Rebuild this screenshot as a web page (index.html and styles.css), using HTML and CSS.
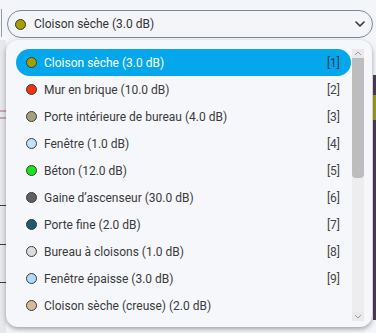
FILE: index.html
```html
<!DOCTYPE html>
<html lang="fr">
<head>
    <meta charset="UTF-8">
    <meta name="viewport" content="width=device-width, initial-scale=1.0">
    <title>Matériau</title>
    <link rel="stylesheet" href="styles.css">
</head>
<body>
    <div class="page">
        <div class="edge-left"></div>
        <div class="main">
            <button class="select">
                <span class="dot" style="background:#a3a000"></span>
                <span class="select-label">Cloison sèche (3.0 dB)</span>
                <svg class="chevron" width="10" height="6" viewBox="0 0 10 6"><path d="M1 1l4 4 4-4" fill="none" stroke="#333" stroke-width="1.6" stroke-linecap="round" stroke-linejoin="round"/></svg>
            </button>
        </div>
        <div class="edge-right"></div>
    </div>

    <div class="menu">
        <ul class="options">
            <li class="option selected"><span class="dot" style="background:#a3a000"></span><span class="name">Cloison sèche (3.0 dB)</span><span class="key">[1]</span></li>
            <li class="option"><span class="dot" style="background:#f5300e"></span><span class="name">Mur en brique (10.0 dB)</span><span class="key">[2]</span></li>
            <li class="option"><span class="dot" style="background:#a6a07a"></span><span class="name">Porte intérieure de bureau (4.0 dB)</span><span class="key">[3]</span></li>
            <li class="option"><span class="dot" style="background:#bfe3ff"></span><span class="name">Fenêtre (1.0 dB)</span><span class="key">[4]</span></li>
            <li class="option"><span class="dot" style="background:#19e619"></span><span class="name">Béton (12.0 dB)</span><span class="key">[5]</span></li>
            <li class="option"><span class="dot" style="background:#606060"></span><span class="name">Gaine d’ascenseur (30.0 dB)</span><span class="key">[6]</span></li>
            <li class="option"><span class="dot" style="background:#1d5a78"></span><span class="name">Porte fine (2.0 dB)</span><span class="key">[7]</span></li>
            <li class="option"><span class="dot" style="background:#dcdcdc"></span><span class="name">Bureau à cloisons (1.0 dB)</span><span class="key">[8]</span></li>
            <li class="option"><span class="dot" style="background:#aedcff"></span><span class="name">Fenêtre épaisse (3.0 dB)</span><span class="key">[9]</span></li>
            <li class="option"><span class="dot" style="background:#d6bb9c"></span><span class="name">Cloison sèche (creuse) (2.0 dB)</span><span class="key"></span></li>
        </ul>
        <div class="scrollbar">
            <div class="scroll-btn">
                <svg width="8" height="5" viewBox="0 0 8 5"><path d="M1 4l3-3 3 3" fill="none" stroke="#9a9a9a" stroke-width="1"/></svg>
            </div>
            <div class="scroll-track">
                <div class="scroll-thumb"></div>
            </div>
            <div class="scroll-btn">
                <svg width="8" height="5" viewBox="0 0 8 5"><path d="M1 1l3 3 3-3" fill="none" stroke="#9a9a9a" stroke-width="1"/></svg>
            </div>
        </div>
    </div>
</body>
</html>
```

FILE: styles.css
```css
body {
    font-family: Roboto, 'Liberation Sans', sans-serif;
    background-color: #f3f5f9;
    margin: 0;
    padding: 0;
    position: relative;
    height: 333px;
    overflow: hidden;
}

.page {
    display: flex;
    height: 333px;
}

/* bits of the page peeking out behind the menu */
.edge-left {
    width: 6px;
    flex: none;
    background:
        linear-gradient(#9a9a9e, #9a9a9e) 1px 9px / 1px 28px no-repeat,
        linear-gradient(#c9a7ae, #c9a7ae) 0 110px / 6px 2px no-repeat,
        linear-gradient(#c9a7ae, #c9a7ae) 0 117px / 6px 2px no-repeat,
        linear-gradient(#3a3a3a, #3a3a3a) 0 205px / 6px 1px no-repeat,
        linear-gradient(#3a3a3a, #3a3a3a) 0 244px / 6px 1px no-repeat,
        linear-gradient(#3a3a3a, #3a3a3a) 0 282px / 6px 1px no-repeat,
        linear-gradient(#e8e8ec, #e8e8ec) 0 40px / 6px 293px no-repeat;
}

.main {
    flex: 1;
    padding: 10px 0 0 1px;
}

.edge-right {
    width: 3px;
    flex: none;
    background:
        linear-gradient(#9b9a1e, #9b9a1e) 0 95px / 3px 25px no-repeat,
        linear-gradient(#4b3c57, #4b3c57) 0 75px / 3px 245px no-repeat;
}

.select {
    display: flex;
    align-items: center;
    width: 100%;
    height: 28px;
    margin: 0;
    padding: 0 7px 0 7px;
    box-sizing: border-box;
    background-color: #f3f5f9;
    border: 1px solid #7c879a;
    border-radius: 14px;
    font-family: inherit;
    font-size: 12px;
    color: #333;
    text-align: left;
}

.select-label {
    flex: 1;
    margin-left: 8px;
}

.chevron {
    flex: none;
}

.dot {
    display: inline-block;
    flex: none;
    width: 11px;
    height: 11px;
    border-radius: 50%;
    border: 1px solid #3a3a3a;
    box-sizing: border-box;
}

.menu {
    position: absolute;
    top: 40px;
    left: 6px;
    width: 366px;
    height: 287px;
    box-sizing: border-box;
    padding: 9px 8px 0 10px;
    display: flex;
    gap: 1px;
    background-color: #f6f7fb;
    border-radius: 12px;
    box-shadow: 0 2px 5px rgba(0, 0, 0, 0.35);
    overflow: hidden;
}

.options {
    list-style: none;
    margin: 0;
    padding: 0;
    flex: 1;
}

.option {
    display: flex;
    align-items: center;
    height: 27px;
    padding: 0 11px 0 10px;
    font-size: 12px;
    color: #3a3a3a;
    border-radius: 14px;
}

.option .name {
    flex: 1;
    margin-left: 7px;
    white-space: nowrap;
}

.option .key {
    color: #444;
}

.option.selected {
    background-color: #05a7ec;
    color: #fff;
}

.option.selected .key {
    color: #2d3e4a;
}

.scrollbar {
    width: 12px;
    flex: none;
    display: flex;
    flex-direction: column;
    margin-bottom: 6px;
    background-color: #ededf0;
}

.scroll-btn {
    height: 9px;
    display: flex;
    align-items: center;
    justify-content: center;
    background-color: #e9e9ec;
}

.scroll-track {
    flex: 1;
}

.scroll-thumb {
    height: 120px;
    background-color: #bdbdbd;
    border-radius: 0 0 4px 4px;
}
```
